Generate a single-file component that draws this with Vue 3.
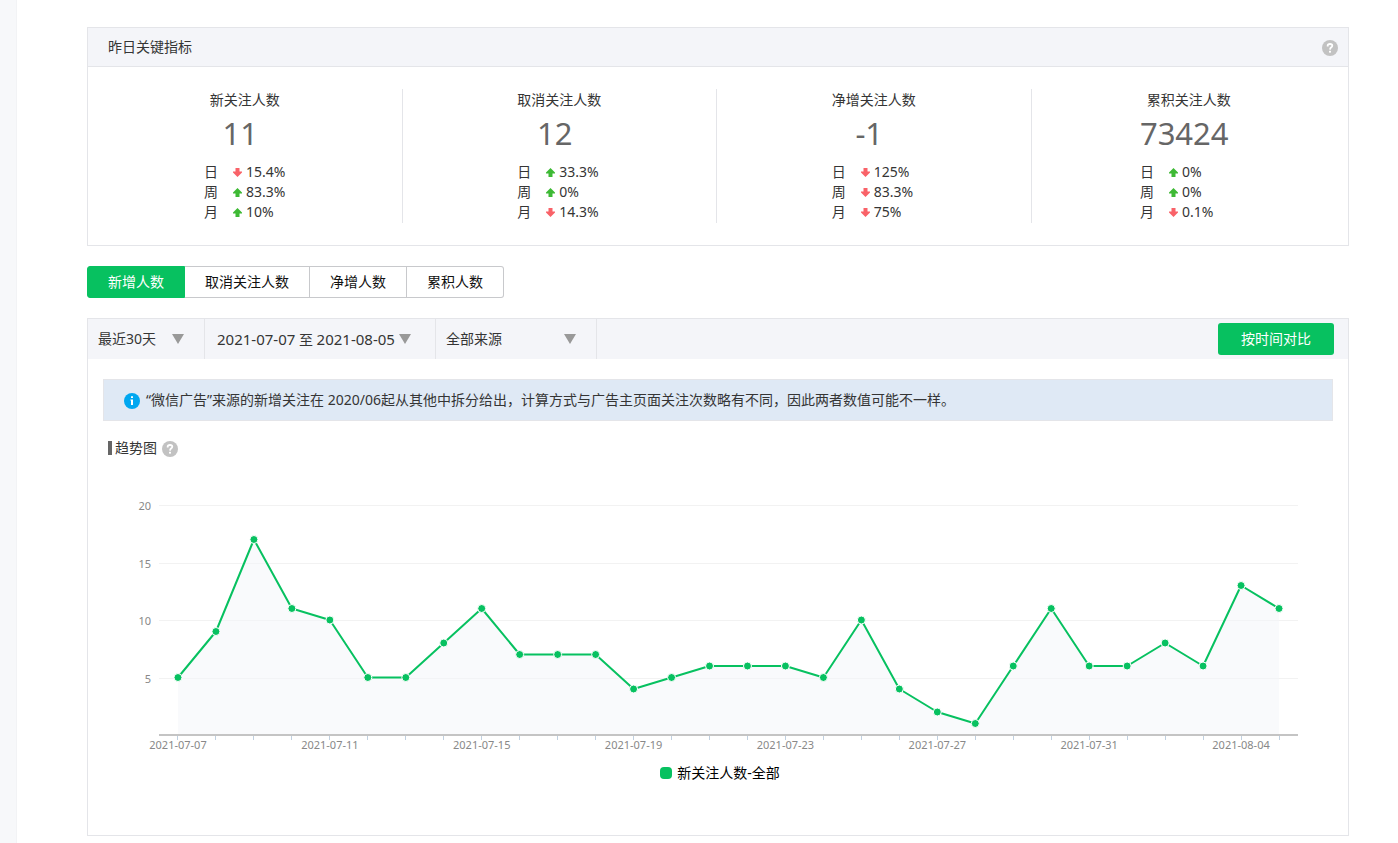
<script setup>
import { ref } from 'vue'

const metrics = [
  { name: '新关注人数', value: '11', rows: [['日', 'down', '15.4%'], ['周', 'up', '83.3%'], ['月', 'up', '10%']] },
  { name: '取消关注人数', value: '12', rows: [['日', 'up', '33.3%'], ['周', 'up', '0%'], ['月', 'down', '14.3%']] },
  { name: '净增关注人数', value: '-1', rows: [['日', 'down', '125%'], ['周', 'down', '83.3%'], ['月', 'down', '75%']] },
  { name: '累积关注人数', value: '73424', rows: [['日', 'up', '0%'], ['周', 'up', '0%'], ['月', 'down', '0.1%']] },
]

const tabs = ['新增人数', '取消关注人数', '净增人数', '累积人数']
const active = ref(0)

const values = [5, 9, 17, 11, 10, 5, 5, 8, 11, 7, 7, 7, 4, 5, 6, 6, 6, 5, 10, 4, 2, 1, 6, 11, 6, 6, 8, 6, 13, 11]
const plot = { left: 71, right: 1210, top: 35, bottom: 265 }
const step = (plot.right - plot.left) / values.length
const unit = (plot.bottom - plot.top) / 20

const dateLabel = (i) => {
  const day = 7 + i
  return day > 31 ? `2021-08-0${day - 31}` : `2021-07-${String(day).padStart(2, '0')}`
}

const points = values.map((v, i) => ({
  x: plot.left + step * (i + 0.5),
  y: plot.bottom - v * unit,
  label: i % 4 === 0 ? dateLabel(i) : '',
}))
const line = points.map((p) => `${p.x},${p.y}`).join(' ')
const area = `${points[0].x},${plot.bottom} ${line} ${points[points.length - 1].x},${plot.bottom}`
const grid = [20, 15, 10, 5].map((v) => ({ v, y: Math.ceil(plot.bottom - v * unit) + 0.5 }))
</script>

<template>
  <div class="page">
    <div class="rail"></div>
    <main class="content">
      <section class="panel">
        <header class="panel-head">
          <h2>昨日关键指标</h2>
          <button type="button" class="help" aria-label="帮助">
            <svg class="badge" width="16" height="16" viewBox="0 0 16 16">
              <circle cx="8" cy="8" r="8" fill="#c2c2c2" />
              <path d="M5.7 6.4V5.6Q5.7 4 8 4T10.3 5.8Q10.3 6.8 9.2 7.4T8 9.6" fill="none" stroke="#fff" stroke-width="1.8" />
              <rect x="7" y="10.8" width="2" height="1.8" fill="#fff" />
            </svg>
          </button>
        </header>
        <div class="metrics">
          <div v-for="m in metrics" :key="m.name" class="metric">
            <div class="metric-box">
              <h3>{{ m.name }}</h3>
              <strong class="figure">{{ m.value }}</strong>
              <div v-for="r in m.rows" :key="r[0]" class="change">
                <span class="period">{{ r[0] }}</span>
                <svg width="9" height="9" viewBox="0 0 9 9">
                  <path v-if="r[1] === 'up'" d="M4.5 0L9 4.5V5.5H6.5V9H2.5V5.5H0V4.5Z" fill="#3eb935" />
                  <path v-else d="M4.5 9L9 4.5V3.5H6.5V0H2.5V3.5H0V4.5Z" fill="#f96268" />
                </svg>
                <span>{{ r[2] }}</span>
              </div>
            </div>
          </div>
        </div>
      </section>

      <nav class="tabs">
        <button
          v-for="(t, i) in tabs"
          :key="t"
          type="button"
          :class="{ active: i === active }"
          @click="active = i"
        >{{ t }}</button>
      </nav>

      <section class="panel">
        <div class="filters">
          <div class="filter range">
            <select aria-label="时间范围">
              <option>最近30天</option>
            </select>
            <svg class="caret" width="12" height="10" viewBox="0 0 12 10"><path d="M0 0H12L6 10Z" /></svg>
          </div>
          <button type="button" class="filter dates">
            <span><span class="date">2021-07-07</span> 至 <span class="date">2021-08-05</span></span>
            <svg class="caret" width="12" height="10" viewBox="0 0 12 10"><path d="M0 0H12L6 10Z" /></svg>
          </button>
          <div class="filter source">
            <select aria-label="来源">
              <option>全部来源</option>
            </select>
            <svg class="caret" width="12" height="10" viewBox="0 0 12 10"><path d="M0 0H12L6 10Z" /></svg>
          </div>
          <button type="button" class="compare">按时间对比</button>
        </div>

        <p class="notice">
          <svg class="badge" width="16" height="16" viewBox="0 0 16 16">
            <circle cx="8" cy="8" r="8" fill="#00a7f0" />
            <path d="M7 3.2H9V5H7ZM6.4 6.4H9V12H7V7.4H6.4Z" fill="#fff" />
          </svg>
          <span>“微信广告”来源的新增关注在 2020/06起从其他中拆分给出，计算方式与广告主页面关注次数略有不同，因此两者数值可能不一样。</span>
        </p>

        <div class="chart-title">
          <h3>趋势图</h3>
          <button type="button" class="help" aria-label="趋势图说明">
            <svg class="badge" width="16" height="16" viewBox="0 0 16 16">
              <circle cx="8" cy="8" r="8" fill="#c2c2c2" />
              <path d="M5.7 6.4V5.6Q5.7 4 8 4T10.3 5.8Q10.3 6.8 9.2 7.4T8 9.6" fill="none" stroke="#fff" stroke-width="1.8" />
              <rect x="7" y="10.8" width="2" height="1.8" fill="#fff" />
            </svg>
          </button>
        </div>

        <svg class="chart" viewBox="0 0 1260 286" role="img" aria-label="趋势图">
          <g v-for="g in grid" :key="g.v">
            <line :x1="plot.left" :x2="plot.right" :y1="g.y" :y2="g.y" stroke="#f2f2f2" />
            <text x="63" :y="g.y + 4.5" text-anchor="end">{{ g.v }}</text>
          </g>
          <polygon :points="area" fill="#f4f5f9" fill-opacity="0.55" />
          <g v-for="(p, i) in points" :key="i">
            <line :x1="Math.floor(p.x) + 0.5" :x2="Math.floor(p.x) + 0.5" :y1="plot.bottom" :y2="plot.bottom + 5" stroke="#c0d0e0" />
            <text v-if="p.label" :x="p.x" y="279" text-anchor="middle">{{ p.label }}</text>
          </g>
          <line :x1="plot.left" :x2="plot.right" :y1="plot.bottom" :y2="plot.bottom" stroke="#c4c4c4" stroke-width="2" />
          <polyline :points="line" fill="none" stroke="#07c160" stroke-width="2" stroke-linejoin="round" />
          <circle v-for="(p, i) in points" :key="i" :cx="p.x" :cy="p.y" r="4" fill="#07c160" stroke="#fff" />
        </svg>

        <div class="legend"><i></i><span>新关注人数-全部</span></div>
      </section>
    </main>
  </div>
</template>

<style>
body {
  margin: 0;
  background: #fff;
}
</style>

<style scoped>
.page {
  display: flex;
  min-height: 100vh;
  font: 400 14px/22px "Noto Sans", "Noto Sans CJK SC", sans-serif;
  color: #353535;
}
.page *,
.page *::before {
  box-sizing: border-box;
}
.rail {
  flex: none;
  width: 17px;
  background: #f7f8fa;
  border-right: 1px solid #f2f3f5;
}
.content {
  flex: 1;
  min-width: 0;
  padding: 27px 49px 7px 70px;
}
h2,
h3,
p {
  margin: 0;
  font: inherit;
}
button,
select {
  margin: 0;
  padding: 0;
  border: 0;
  background: none;
  font: inherit;
  color: inherit;
}
svg {
  display: block;
  flex: none;
}
.badge {
  margin-top: 2px;
}
.panel {
  border: 1px solid #e4e5e9;
}
.panel-head {
  display: flex;
  align-items: center;
  justify-content: space-between;
  height: 39px;
  padding: 0 10px 0 20px;
  background: #f4f5f9;
  border-bottom: 1px solid #e4e5e9;
}
.metrics {
  display: grid;
  grid-template-columns: repeat(4, 1fr);
  padding: 22px 2px 22px 0;
}
.metric {
  display: flex;
  justify-content: center;
  height: 134px;
  border-right: 1px solid #e4e5e9;
}
.metric:last-child {
  border-right: 0;
}
.metric-box h3 {
  text-align: center;
}
.figure {
  display: block;
  padding-right: 9px;
  margin-bottom: 7px;
  font-size: 31px;
  font-weight: 400;
  line-height: 44px;
  text-align: center;
  color: #666;
}
.change {
  display: flex;
  align-items: center;
  line-height: 20px;
}
.change svg {
  margin: 0 4px 0 15px;
}
.tabs {
  display: flex;
  margin: 20px 0;
}
.tabs button {
  height: 32px;
  padding: 0 20px;
  border: 1px solid #c8c9cc;
  border-left: 0;
  color: #111;
}
.tabs button:first-child {
  border-left: 1px solid #c8c9cc;
  border-radius: 3px 0 0 3px;
}
.tabs button:last-child {
  border-radius: 0 3px 3px 0;
}
.tabs button.active {
  border-color: #07c160;
  background: #07c160;
  color: #fff;
}
.filters {
  display: flex;
  align-items: center;
  height: 40px;
  padding-right: 14px;
  background: #f4f5f9;
}
.filter {
  display: grid;
  align-items: center;
  height: 40px;
  border-right: 1px solid #e4e5e9;
}
.filter select {
  grid-area: 1 / 1;
  width: 100%;
  height: 40px;
  padding-left: 10px;
  appearance: none;
}
.filter .caret {
  fill: #999;
}
.range .caret,
.source .caret {
  grid-area: 1 / 1;
  justify-self: end;
  margin-right: 20px;
  pointer-events: none;
}
.range {
  width: 117px;
}
.source {
  width: 161px;
}
.dates {
  display: flex;
  gap: 4px;
  padding: 0 24px 0 12px;
}
.date {
  font-size: 15px;
}
.compare {
  height: 32px;
  margin-left: auto;
  padding: 0 23px;
  border-radius: 3px;
  background: #07c160;
  color: #fff;
}
.notice {
  display: flex;
  align-items: center;
  gap: 6px;
  min-height: 42px;
  margin: 20px 15px 16px;
  padding: 0 20px;
  border: 1px solid #e4e5e9;
  background: #dfe9f5;
}
.chart-title {
  display: flex;
  align-items: center;
  padding-left: 20px;
}
.chart-title::before {
  content: "";
  width: 4px;
  height: 14px;
  margin-right: 3px;
  background: #666;
}
.chart-title h3 {
  margin-right: 5px;
}
.chart {
  width: 100%;
  height: auto;
  margin-top: 11px;
}
.chart text {
  font-size: 11px;
  fill: #888;
}
.legend {
  display: flex;
  align-items: center;
  justify-content: center;
  gap: 5px;
  margin: 6px 0 51px;
  padding-left: 4px;
  color: #000;
}
.legend i {
  width: 12px;
  height: 12px;
  border-radius: 4px;
  background: #07c160;
}
</style>
